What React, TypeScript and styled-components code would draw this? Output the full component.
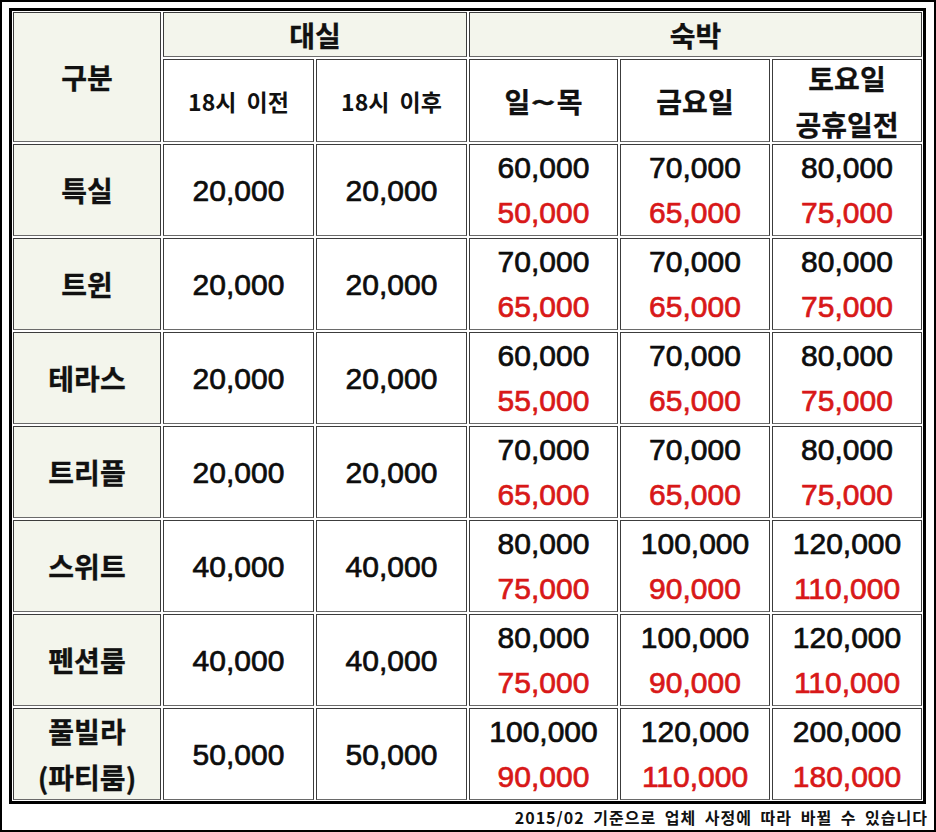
import styled, { createGlobalStyle } from 'styled-components';

const GlobalStyle = createGlobalStyle`
  html, body {
    margin: 0;
    padding: 0;
    background: #fff;
  }
  * {
    box-sizing: border-box;
  }
`;

type Room = {
  name: string[];
  day: [string, string];
  stay: [string, string][];
};

const ROOMS: Room[] = [
  { name: ['특실'], day: ['20,000', '20,000'], stay: [['60,000', '50,000'], ['70,000', '65,000'], ['80,000', '75,000']] },
  { name: ['트윈'], day: ['20,000', '20,000'], stay: [['70,000', '65,000'], ['70,000', '65,000'], ['80,000', '75,000']] },
  { name: ['테라스'], day: ['20,000', '20,000'], stay: [['60,000', '55,000'], ['70,000', '65,000'], ['80,000', '75,000']] },
  { name: ['트리플'], day: ['20,000', '20,000'], stay: [['70,000', '65,000'], ['70,000', '65,000'], ['80,000', '75,000']] },
  { name: ['스위트'], day: ['40,000', '40,000'], stay: [['80,000', '75,000'], ['100,000', '90,000'], ['120,000', '110,000']] },
  { name: ['펜션룸'], day: ['40,000', '40,000'], stay: [['80,000', '75,000'], ['100,000', '90,000'], ['120,000', '110,000']] },
  { name: ['풀빌라', '(파티룸)'], day: ['50,000', '50,000'], stay: [['100,000', '90,000'], ['120,000', '110,000'], ['200,000', '180,000']] },
];

export default function App() {
  return (
    <>
      <GlobalStyle />
      <StFrame>
        <StTable>
          <StCell $head $rows={2}>
            <StLabel>구분</StLabel>
          </StCell>
          <StCell $head $cols={2}>
            <StLabel>대실</StLabel>
          </StCell>
          <StCell $head $cols={3}>
            <StLabel>숙박</StLabel>
          </StCell>

          <StCell>
            <StSubLabel>18시 이전</StSubLabel>
          </StCell>
          <StCell>
            <StSubLabel>18시 이후</StSubLabel>
          </StCell>
          <StCell>
            <StLabel>
              일<StTilde>~</StTilde>목
            </StLabel>
          </StCell>
          <StCell>
            <StLabel>금요일</StLabel>
          </StCell>
          <StCell>
            <StLabel>토요일</StLabel>
            <StLabel>공휴일전</StLabel>
          </StCell>

          {ROOMS.map((room) => (
            <StRow key={room.name.join('')}>
              <StCell $head>
                {room.name.map((line) => (
                  <StLabel key={line}>{line}</StLabel>
                ))}
              </StCell>
              {room.day.map((price, i) => (
                <StCell key={`d${i}`}>
                  <StPrice>{price}</StPrice>
                </StCell>
              ))}
              {room.stay.map(([regular, sale], i) => (
                <StCell key={`s${i}`}>
                  <StPrice>{regular}</StPrice>
                  <StPrice $sale>{sale}</StPrice>
                </StCell>
              ))}
            </StRow>
          ))}
        </StTable>
        <StNote>2015/02 기준으로 업체 사정에 따라 바뀔 수 있습니다</StNote>
      </StFrame>
    </>
  );
}

const StFrame = styled.div`
  width: 936px;
  height: 832px;
  border: 2px solid #000;
  padding: 6px 6px 0 7px;
  background: #fff;
`;

const StTable = styled.div`
  display: grid;
  grid-template-columns: 148px 151px 151px 149px 150px 150px;
  grid-template-rows: 45px 83px repeat(7, 92px);
  gap: 2px;
  width: fit-content;
  padding: 1px;
  border: 3px solid #000;
`;

const StRow = styled.div`
  display: contents;
`;

const StCell = styled.div<{ $head?: boolean; $cols?: number; $rows?: number }>`
  display: flex;
  flex-direction: column;
  align-items: center;
  justify-content: center;
  grid-column: span ${({ $cols }) => $cols ?? 1};
  grid-row: span ${({ $rows }) => $rows ?? 1};
  border: 1px solid #3c3c3c;
  border-bottom-color: #6a6a6a;
  background: ${({ $head }) => ($head ? '#f3f5ec' : '#fff')};
`;

const StLabel = styled.span`
  font-family: 'Noto Sans CJK KR', 'Liberation Sans', sans-serif;
  font-weight: 700;
  font-size: 28px;
  line-height: 46px;
  -webkit-text-stroke: 0.3px currentColor;
  color: #111;
  white-space: nowrap;
`;

const StTilde = styled.span`
  display: inline-block;
  margin: 0 5px;
  transform: scaleX(1.5);
`;

const StSubLabel = styled.span`
  font-family: 'Noto Sans CJK KR', 'Liberation Sans', sans-serif;
  font-weight: 700;
  font-size: 23px;
  line-height: 30px;
  word-spacing: 5px;
  color: #111;
  white-space: nowrap;
`;

const StPrice = styled.span<{ $sale?: boolean }>`
  font-family: 'Liberation Sans', Arial, sans-serif;
  font-size: 30px;
  line-height: 45px;
  -webkit-text-stroke: 0.7px currentColor;
  color: ${({ $sale }) => ($sale ? '#d81818' : '#0d0d0d')};
  white-space: nowrap;
`;

const StNote = styled.div`
  font-family: 'Noto Sans CJK KR', 'Liberation Sans', sans-serif;
  font-weight: 700;
  font-size: 16px;
  line-height: 26px;
  letter-spacing: 1px;
  word-spacing: 4px;
  text-align: right;
  color: #111;
  white-space: nowrap;
`;
